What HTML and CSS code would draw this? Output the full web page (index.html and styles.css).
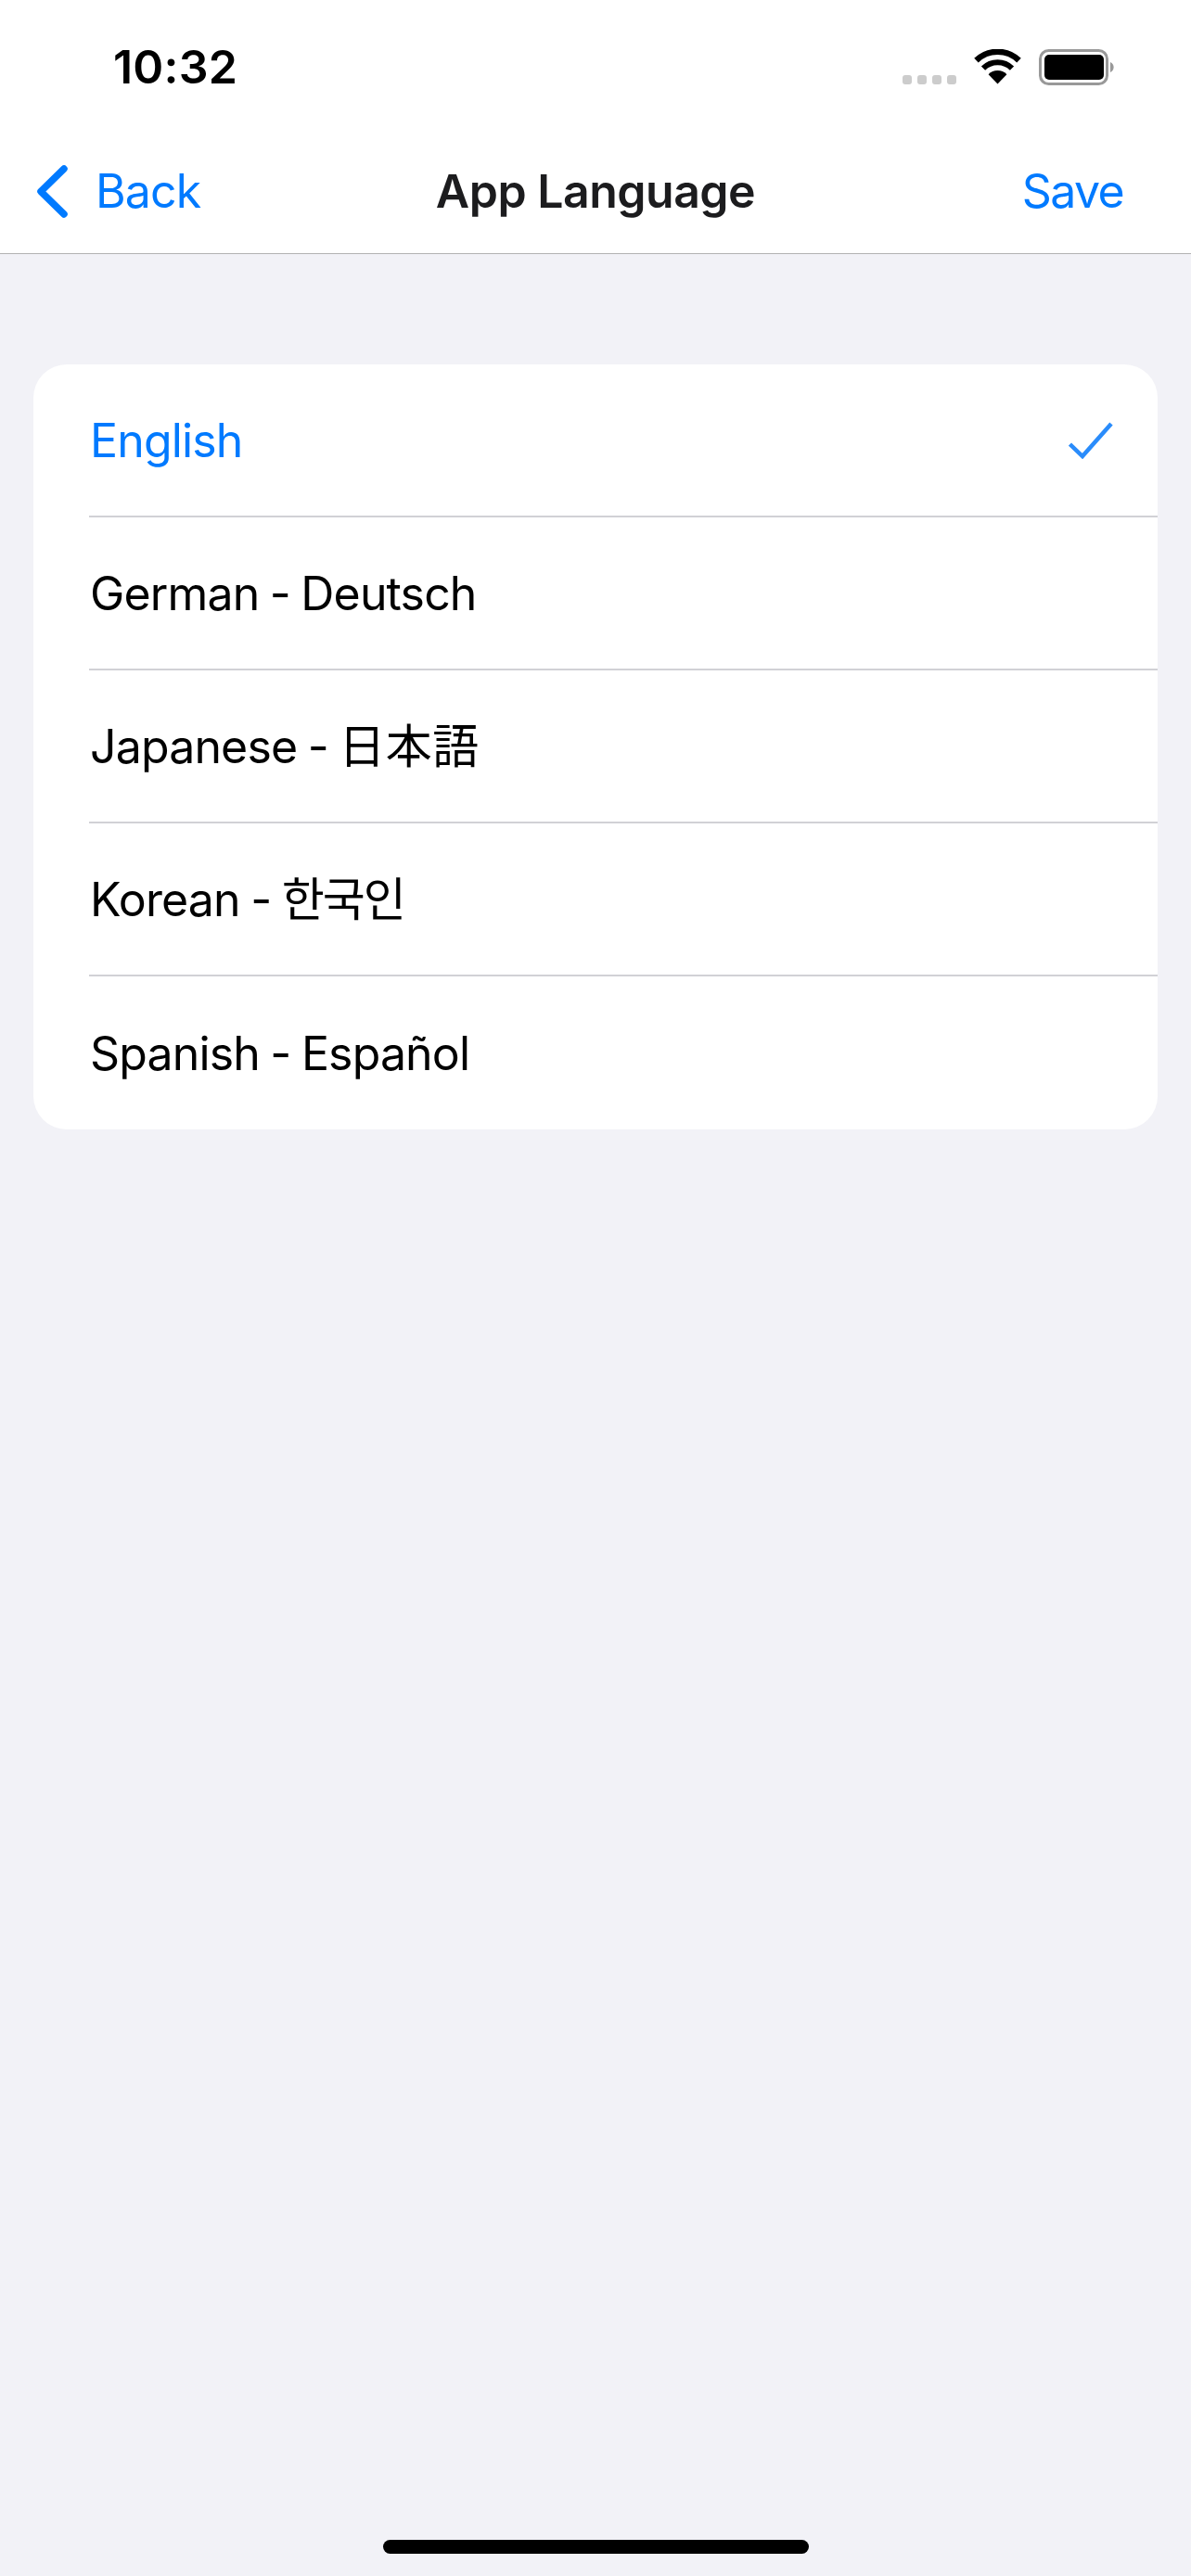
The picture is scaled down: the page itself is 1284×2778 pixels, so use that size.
FILE: index.html
```html
<!DOCTYPE html>
<html lang="en">
<head>
	<meta charset="UTF-8">
	<meta name="viewport" content="width=device-width, initial-scale=1.0">
	<title>App Language</title>
	<link rel="stylesheet" href="styles.css">
</head>
<body>
	<div class="page">
		<header class="top">
			<div class="status">
				<span class="time">10:32</span>
				<div class="status-icons">
					<div class="signal"><i></i><i></i><i></i><i></i></div>
					<svg class="wifi" width="51" height="38" viewBox="0 0 51 38">
						<path d="M25.5 37.5L15.6 27.2A14 14 0 0 1 35.4 27.2Z" fill="#000"/>
						<path d="M10 20.6A22 22 0 0 1 41 20.6" fill="none" stroke="#000" stroke-width="6"/>
						<path d="M2.5 12.2A33 33 0 0 1 48.5 12.2" fill="none" stroke="#000" stroke-width="6.5"/>
					</svg>
					<svg class="battery" width="82" height="39" viewBox="0 0 82 39">
						<rect x="1.5" y="1.5" width="72" height="36" rx="9" fill="none" stroke="#999" stroke-width="3"/>
						<rect x="6" y="6" width="64" height="27" rx="5" fill="#000"/>
						<path d="M77 14A6 6 0 0 1 77 25Z" fill="#999"/>
					</svg>
				</div>
			</div>
			<nav class="nav">
				<a href="#" class="nav-back">
					<svg class="chevron" width="33" height="57" viewBox="0 0 33 57">
						<path d="M29 4L4 28.5L29 53" fill="none" stroke="#007aff" stroke-width="7.5" stroke-linecap="round" stroke-linejoin="round"/>
					</svg>
					<span class="back-text">Back</span>
				</a>
				<h1 class="nav-title">App Language</h1>
				<a href="#" class="nav-save">Save</a>
			</nav>
		</header>

		<ul class="list-lang">
			<li class="item-lang selected">
				<span class="label-lang">English</span>
				<svg class="check" width="48" height="40" viewBox="0 0 48 40">
					<path d="M1.5 24L15 37L46 2" fill="none" stroke="#2a8cfb" stroke-width="4.5"/>
				</svg>
			</li>
			<li class="item-lang"><span class="label-lang">German - Deutsch</span></li>
			<li class="item-lang"><span class="label-lang">Japanese - <span class="native-ja">日本語</span></span></li>
			<li class="item-lang"><span class="label-lang">Korean - <span class="native-ko">한국인</span></span></li>
			<li class="item-lang"><span class="label-lang">Spanish - Español</span></li>
		</ul>

		<div class="home-bar"></div>
	</div>
</body>
</html>
```

FILE: styles.css
```css
*{box-sizing: border-box;}
body{
	margin: 0; background-color: #f2f2f7; color: #000;
	font-family: Inter, "Noto Sans CJK JP", sans-serif;
}
.page{height: 2778px; display: flex; flex-direction: column; overflow: hidden;}

.top{background-color: #fff; border-bottom: 1px solid #b2b2b2; height: 274px;}
.status{
	height: 132px; padding: 53px 82px 0 122px;
	display: flex; justify-content: space-between; align-items: flex-start;
}
.time{font-size: 50px; font-weight: 600; line-height: 39px; letter-spacing: 0.2px;}
.status-icons{display: flex; align-items: flex-end; gap: 19px;}
.signal{display: flex; gap: 6px; margin-bottom: 1px;}
.signal i{width: 10px; height: 10px; border-radius: 3px; background-color: #ccc;}
.wifi{margin-bottom: 1px;}

.nav{
	height: 141px; padding: 7px 40px 0;
	display: grid; grid-template-columns: 1fr auto 1fr; align-items: center;
	font-size: 50px; line-height: 60px; letter-spacing: -0.9px;
}
.nav a{color: #007aff; text-decoration: none;}
.nav-back{display: flex; align-items: center; gap: 30px;}
.nav-title{margin: 0; font-size: 50px; font-weight: 600; color: #1c1c1e; letter-spacing: -0.5px;}
.nav-save{justify-self: end; margin-right: 33px; letter-spacing: -1.6px;}

.list-lang{
	list-style: none; padding: 0; margin: 119px 36px 0;
	background-color: #fff; border-radius: 36px;
}
.item-lang{
	height: 165px; margin-left: 60px; padding: 0 48px 0 1px;
	border-bottom: 2px solid #d1d1d6;
	display: flex; align-items: center; justify-content: space-between;
	font-size: 50px; line-height: 60px; letter-spacing: -0.85px; word-spacing: -1.8px;
}
.item-lang:last-child{border-bottom: 0;}
.item-lang.selected{color: #007aff;}
.native-ja{letter-spacing: 0.5px;}
.native-ko{letter-spacing: -2px;}

.home-bar{
	width: 459px; height: 15px; margin: auto auto 24px;
	background-color: #000; border-radius: 8px;
}
```
